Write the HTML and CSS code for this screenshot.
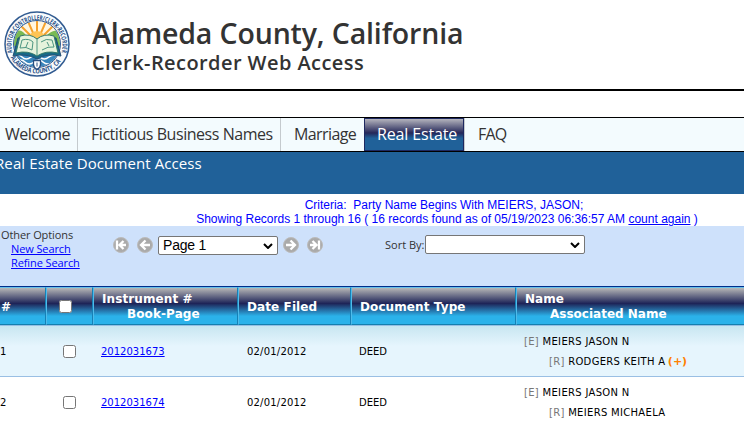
FILE: index.html
```html
<!DOCTYPE html>
<html lang="en">
<head>
<meta charset="utf-8">
<title>Clerk-Recorder Web Access</title>
<link rel="stylesheet" href="styles.css">
</head>
<body>
<header class="banner">
  <svg class="seal" viewBox="0 0 66 66" width="66" height="66" role="img" aria-label="Alameda County seal">
    <defs>
      <clipPath id="inner"><circle cx="33" cy="33" r="23"/></clipPath>
      <path id="top-arc" d="M8.500 41.500A25.500 25.500 0 1 1 57.500 41.500"/>
      <path id="bottom-arc" d="M6.500 46.500A30 30 0 0 0 59.500 46.500"/>
    </defs>
    <circle cx="33" cy="33" r="32" fill="#f8fafc" stroke="#315b91" stroke-width="1.5"/>
    <g clip-path="url(#inner)">
      <path fill="#fff6df" d="M9 8h48v50H9z"/>
      <g stroke="#f5a12c" stroke-width="2"><path d="M33 31 10 22M33 31 15 13M33 31 23 8M33 31V7M33 31 43 8M33 31 51 13M33 31 56 22"/></g>
      <circle cx="33" cy="29" r="9" fill="#ffc454"/>
      <path fill="#79ba54" d="M9 21c7-4 11 0 14 5l4 9H9zM57 20c-8-2-13 2-17 8l-2 7h19z"/>
      <path fill="#3987bd" d="M9 35h48v23H9z"/>
      <path d="M9 46q5-4 9 0t9 0 9 0 9 0 12 0M12 51q5-4 9 0t9 0 9 0 12 0" fill="none" stroke="#fff" stroke-width="1.5"/>
    </g>
    <circle cx="33" cy="33" r="23.500" fill="none" stroke="#315b91"/>
    <path fill="#176a88" stroke="#244d73" d="m14 27-5 18q14-3 24 3 10-6 24-3l-5-18q-11-4-19 2-8-6-19-2Z"/>
    <path fill="#e5f3dc" stroke="#347867" d="m16 25-4 17q12-3 21 3 9-6 21-3l-4-17q-10-3-17 3-7-6-17-3Z"/>
    <path fill="none" stroke="#4c9580" d="M33 28v16M18 29q7-2 11 2l-1 8q-6-4-12-2ZM37 31q5-4 11-2l2 7q-6-1-12 3M24 31l-2 5M43 31l2 4"/>
    <path fill="#fff" stroke="#284f80" stroke-width="1.3" d="M29.500 49.500h7v4q0 3-3.500 5-3.500-2-3.500-5Z"/>
    <path stroke="#284f80" d="M33 51.500v4"/>
    <text class="seal-text"><textPath href="#top-arc" textLength="94" lengthAdjust="spacingAndGlyphs">AUDITOR-CONTROLLER/CLERK-RECORDER</textPath></text>
    <text class="seal-text"><textPath href="#bottom-arc" textLength="60" lengthAdjust="spacingAndGlyphs">ALAMEDA COUNTY, CA</textPath></text>
  </svg>
  <div class="titles">
    <h1>Alameda County, California</h1>
    <h2>Clerk-Recorder Web Access</h2>
  </div>
</header>
<div class="greeting"><span>Welcome Visitor.</span></div>
<nav class="menu">
  <a class="w1"><span>Welcome</span></a><a class="w2"><span>Fictitious Business Names</span></a><a class="w3"><span>Marriage</span></a><a class="w4 active"><span>Real Estate</span></a><a class="w5"><span>FAQ</span></a>
</nav>
<div class="section-title"><span>Real Estate Document Access</span></div>
<div class="criteria">
  <div><span class="crit-a">Criteria:&nbsp; Party Name Begins With MEIERS, JASON;</span></div>
  <div class="line2"><span class="crit-b">Showing Records 1 through 16 ( 16 records found as of 05/19/2023 06:36:57 AM <a class="link">count again</a> )</span></div>
</div>
<div class="tools">
  <div class="options"><div><span class="oo">Other Options</span></div><div class="sub"><a class="link ns">New Search</a></div><div class="sub"><a class="link rs">Refine Search</a></div></div>
  <div class="pager">
    <svg class="disc" viewBox="0 0 16 16"><circle cx="8" cy="8" r="7.500" fill="#aaa" stroke="#bbb"/><path d="M4 3.500v9M13 8H7M10.500 4 6.500 8l4 4"/></svg>
    <svg class="disc" viewBox="0 0 16 16"><circle cx="8" cy="8" r="7.500" fill="#aaa" stroke="#bbb"/><path d="M13 8H4.500M8.500 3.500 4 8l4.500 4.500"/></svg>
    <div class="select page"><span>Page 1</span><svg viewBox="0 0 10 6"><path d="m1 1 4 4 4-4"/></svg></div>
    <svg class="disc" viewBox="0 0 16 16"><circle cx="8" cy="8" r="7.500" fill="#aaa" stroke="#bbb"/><path d="M3 8h8.500M7.500 3.500 12 8l-4.500 4.500"/></svg>
    <svg class="disc" viewBox="0 0 16 16"><circle cx="8" cy="8" r="7.500" fill="#aaa" stroke="#bbb"/><path d="M12 3.500v9M3 8h6M5.500 4l4 4-4 4"/></svg>
  </div>
  <div class="sort"><span class="sb">Sort By:</span><div class="select"><svg viewBox="0 0 10 6"><path d="m1 1 4 4 4-4"/></svg></div></div>
</div>
<div class="grid head">
  <div class="num">#</div><div class="chk"><input type="checkbox" aria-label="Select all"></div>
  <div class="two">Instrument #<br><span class="ind">Book-Page</span></div><div class="date">Date Filed</div><div class="type">Document Type</div>
  <div class="names">Name<br><span class="ind">Associated Name</span></div>
</div>
<div class="grid row shade">
  <div class="num">1</div><div class="chk"><input type="checkbox" aria-label="Select record 1"></div>
  <div class="two"><a class="link">2012031673</a></div><div class="date">02/01/2012</div><div class="type">DEED</div>
  <div class="names"><div><i>[E]</i> MEIERS JASON N</div><div class="ind"><i>[R]</i> RODGERS KEITH A <b>(+)</b></div></div>
</div>
<div class="grid row">
  <div class="num">2</div><div class="chk"><input type="checkbox" aria-label="Select record 2"></div>
  <div class="two"><a class="link">2012031674</a></div><div class="date">02/01/2012</div><div class="type">DEED</div>
  <div class="names"><div><i>[E]</i> MEIERS JASON N</div><div class="ind"><i>[R]</i> MEIERS MICHAELA</div></div>
</div>
</body>
</html>
```
FILE: styles.css
```css
* { box-sizing: border-box; }
body { margin: 0; width: 744px; height: 426px; overflow: hidden; background: #fff; color: #333; font-family: "Open Sans", sans-serif; white-space: nowrap; }
.banner { height: 91px; border-bottom: 2px solid #000; display: flex; padding: 11px 0 0 4px; }
.seal { flex: none; }
.seal-text { font: bold 6.8px "Open Sans", sans-serif; fill: #244d85; }
.titles { padding: 5px 0 0 22px; }
h1, h2 { margin: 0; font-weight: 600; }
h1 { font-size: 28.5px; line-height: 34px; letter-spacing: -.14px; }
h2 { margin-top: 1px; font-size: 20px; line-height: 24px; letter-spacing: .43px; }
.greeting { height: 27px; border-bottom: 1px solid #000; padding-left: 11px; font-size: 13px; line-height: 23px; letter-spacing: -.13px; }
.menu { height: 34px; border-bottom: 1px solid #000; background: #f3fbfe; display: flex; font-size: 16px; line-height: 33px; letter-spacing: -.45px; }
.menu a { border-right: 1px solid #c4cace; padding-left: 13px; }
.menu .w1 { width: 78px; padding-left: 5px; letter-spacing: -.55px; }
.menu .w2 { width: 203px; }
.menu .w3 { width: 83px; border: 0; letter-spacing: -.6px; }
.menu .w4 { width: 100px; padding-left: 12px; border: 1px solid #1d2860; color: #fff; line-height: 31px; letter-spacing: -.15px; background: linear-gradient(#b4b4bd, #242759 45%, #206199 62%); }
.menu .w5 { border: 0; border-left: 1px solid #c4cace; letter-spacing: -.8px; }
.section-title { height: 42px; background: #206199; color: #fff; font-size: 15px; font-weight: 500; line-height: 22px; letter-spacing: .1px; }
.section-title span { margin-left: -5px; }
.criteria { height: 32px; padding: 4px 0 0 144px; text-align: center; color: #00f; font: 12px/14px "Liberation Sans", Arial, sans-serif; }
.criteria .line2 { padding-left: 6px; }
.link { color: #00f; text-decoration: underline; }
.tools { height: 60px; background: #cee1fb; display: flex; font-size: 11px; }
.options { width: 113px; padding: 2px 0 0 1px; line-height: 14px; letter-spacing: -.1px; }
.sub { padding-left: 10px; }
.pager { display: flex; gap: 8px; width: 272px; padding-top: 10px; }
.disc { flex: none; width: 16px; height: 16px; margin-top: 1px; }
.disc path { fill: none; stroke: #fff; stroke-width: 2.3; }
.select { display: flex; align-items: center; justify-content: space-between; width: 160px; height: 19px; border: 1px solid #767676; border-radius: 2px; background: #fff; color: #000; }
.select svg { width: 10px; height: 6px; margin: 0 4px 0 auto; }
.select path { fill: none; stroke: #000; stroke-width: 2; }
.page { width: 120px; margin: 0 -3px; padding-left: 4px; font: 14px/17px "Liberation Sans", Arial, sans-serif; letter-spacing: -.2px; }
.sort { display: flex; padding-top: 9px; line-height: 20px; }
.sort .sb { width: 40px; }
.grid { display: grid; grid-template-columns: 46px 47px 145px 113px 165px 229px; color: #000; font-family: "DejaVu Sans", Verdana, sans-serif; }
.grid > div { display: flex; flex-direction: column; justify-content: center; }
.grid .names, .head .two { display: block; }
.grid input { width: 13px; height: 13px; margin: 0 0 0 17px; }
.head { height: 40px; border-top: 1px solid #002e8c; border-bottom: 1px solid #95bfe4; color: #fff; font-size: 12px; font-weight: bold; line-height: 15px; letter-spacing: .1px; }
.head > div { border-top: 1px solid #67bfe9; border-right: 1px solid #1681b7; border-bottom: 1px solid #157fae; border-left: 1px solid #4fbbea; background: linear-gradient(#b7b7b7, #1e2458 43%, #2bb2ea 78%); }
.head input { margin-left: 12px; }
.head .two { padding: 4px 0 0 8px; }
.head .two .ind, .head .names .ind { padding-left: 25px; }
.head .names { padding: 4px 0 0 8px; border-right: 0; letter-spacing: 0; }
.head .date { padding: 2px 0 0 8px; }
.head .type { padding: 2px 0 0 8px; }
.num { padding-left: 1px; }
.head .num { border-left: 0; padding-top: 2px; }
.row { height: 51px; border-bottom: 1px solid #9abfe4; font-size: 10px; }
.shade { background: linear-gradient(#c8e6f1, #e6f5fd 40%); }
.row .num { padding-left: 0; }
.row .two { padding-left: 8px; }
.row .date { padding-left: 9px; letter-spacing: .2px; }
.row .type { padding-left: 8px; }
.row .names { padding: 6px 0 0 8px; line-height: 20px; letter-spacing: .31px; }
.row .names .ind { padding-left: 25px; }
.row i { color: #777; font-style: normal; }
.row b { color: #ff8000; font-size: 11px; line-height: 1; letter-spacing: 0; margin-left: -1px; }
```
